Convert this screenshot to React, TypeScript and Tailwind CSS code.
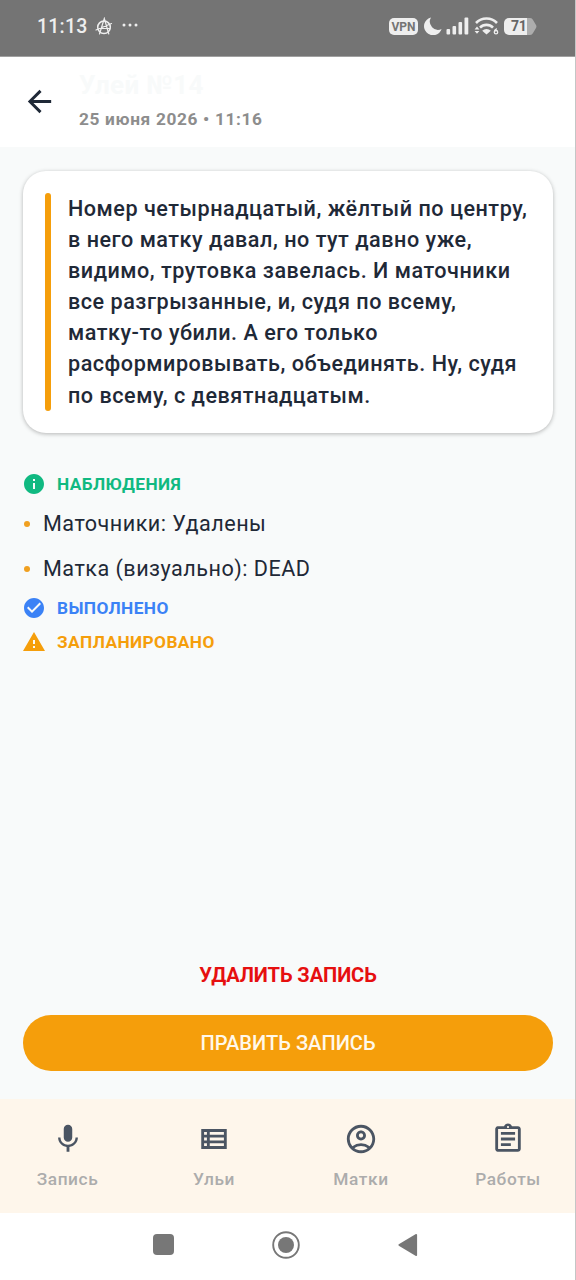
import React from 'react';
import {
    MdArrowBack,
    MdCheckCircle,
    MdInfo,
    MdMic,
    MdOutlineAccountCircle,
    MdOutlineAssignment,
    MdOutlineViewList,
    MdWarning,
} from 'react-icons/md';
import { IconType } from 'react-icons';

const NOTE_LINES = [
    'Номер четырнадцатый, жёлтый по центру,',
    'в него матку давал, но тут давно уже,',
    'видимо, трутовка завелась. И маточники',
    'все разгрызанные, и, судя по всему,',
    'матку-то убили. А его только',
    'расформировывать, объединять. Ну, судя',
    'по всему, с девятнадцатым.',
];

const OBSERVATIONS = ['Маточники: Удалены', 'Матка (визуально): DEAD'];

const TABS: { label: string; icon: IconType }[] = [
    { label: 'Запись', icon: MdMic },
    { label: 'Ульи', icon: MdOutlineViewList },
    { label: 'Матки', icon: MdOutlineAccountCircle },
    { label: 'Работы', icon: MdOutlineAssignment },
];

const StatusBar = () => (
    <div className="flex h-14 shrink-0 items-center bg-[#747474] pl-[37px] pr-[39px] pb-[4px] text-[#eeeeee]">
        <span className="pt-[2px] text-[19.5px] font-medium leading-6 tracking-[0.2px]">11:13</span>
        {/* circled A */}
        <svg className="ml-[8px] h-[19px] w-[18px]" viewBox="0 0 18 19" fill="none" stroke="currentColor" strokeWidth="1.5" strokeLinecap="round">
            <circle cx="9" cy="10.3" r="6.3" />
            <path d="M4.5 17 9.3 1.5 13.8 17M1 13 16.5 6.5M4 11.5h11" strokeWidth="1.2" />
        </svg>
        <svg className="ml-[9px] mb-[2px] h-[4px] w-[16px]" viewBox="0 0 16 4" fill="currentColor">
            <circle cx="2" cy="2" r="1.5" />
            <circle cx="8" cy="2" r="1.5" />
            <circle cx="14" cy="2" r="1.5" />
        </svg>

        <div className="ml-auto flex items-center">
            <span className="flex h-[17px] w-[29px] items-center justify-center rounded-[5px] bg-[#eeeeee] pt-px text-[12px] font-bold leading-none text-[#747474]">VPN</span>
            <svg className="ml-[6px] h-[18px] w-[18px]" viewBox="0 0 18 18" fill="currentColor">
                <path d="M7 .5A9 9 0 1 0 17.6 12 8.2 8.2 0 0 1 7 .5Z" />
            </svg>
            <svg className="ml-[4px] h-[18px] w-[23px]" viewBox="0 0 23 18" fill="currentColor">
                <rect x="0.5" y="12" width="3.6" height="5.5" rx="1" />
                <rect x="6.5" y="9" width="3.6" height="8.5" rx="1" />
                <rect x="12.5" y="5" width="3.6" height="12.5" rx="1" />
                <rect x="18.5" y="0.5" width="3.8" height="17" rx="1" />
            </svg>
            <svg className="ml-[5px] h-[18px] w-[25px]" viewBox="0 0 25 18" fill="none" stroke="currentColor">
                <path d="M2 6A14.5 14.5 0 0 1 23 6" strokeWidth="2.6" />
                <path d="M6 10.7A9 9 0 0 1 19 10.7" strokeWidth="2.6" />
                <path d="M8.2 13.8 12.5 17.5 16.8 13.8A6 6 0 0 0 8.2 13.8Z" fill="currentColor" stroke="none" />
                <path d="M3 9.5 5.4 12.4H.6ZM.6 14H5.4L3 16.8Z" fill="currentColor" stroke="none" />
                <path d="M22.8 11.6C21.2 12.3 20.3 13.6 20.3 15.2" strokeWidth="1.3" />
                <circle cx="22" cy="15.2" r="1.7" strokeWidth="1.3" />
            </svg>
            <div className="relative ml-[5px] flex h-[17px] w-[33px] items-center">
                <svg className="absolute inset-0 h-[17px] w-[33px]" viewBox="0 0 33 17">
                    <path d="M5 0H23V17H5A5 5 0 0 1 0 12V5A5 5 0 0 1 5 0Z" fill="#eeeeee" />
                    <path d="M23 0H26C27.5 0 28.4.7 29 2L32 7C32.6 8 32.6 9 32 10L29 15C28.4 16.3 27.5 17 26 17H23Z" fill="#adadad" />
                </svg>
                <span className="relative pl-[7px] text-[14px] font-bold leading-none tracking-[-0.3px] text-[#666666]">71</span>
            </div>
        </div>
    </div>
);

const Header = () => (
    <header className="flex h-[91px] shrink-0 items-start border-t border-[#a0a0a0] bg-white pl-[22px]">
        <MdArrowBack className="mt-[27px] h-[35px] w-[35px] text-[#1f2937]" />
        <div className="ml-[22px] pt-[12px]">
            <h1 className="text-[26px] font-bold leading-[32px] tracking-[0.4px] text-[#f8fafa]">Улей №14</h1>
            <p className="mt-[6px] text-[17.3px] font-bold leading-6 tracking-[0.65px] text-[#8d8d8d]">25 июня 2026 • 11:16</p>
        </div>
    </header>
);

const SectionTitle = ({ icon: Icon, title, className }: { icon: IconType; title: string; className: string }) => (
    <div className={`flex h-[34px] items-center ${className}`}>
        <Icon className="-ml-px h-[24px] w-[24px]" />
        <h2 className="ml-[11px] pt-px text-[17.3px] font-bold tracking-[0.4px]">{title}</h2>
    </div>
);

const BottomNav = () => (
    <nav className="grid h-[114px] shrink-0 grid-cols-[135px_158px_136px_158px] overflow-hidden bg-[#fef6eb]">
        {TABS.map(({ label, icon: Icon }) => (
            <div key={label} className="flex flex-col items-center pt-[23px]">
                <Icon className="h-[34px] w-[34px] text-[#4b5563]" />
                <span className="mt-[11px] text-[17.3px] font-medium leading-6 tracking-[0.6px] text-[#acacac]">{label}</span>
            </div>
        ))}
    </nav>
);

const SystemNav = () => (
    <div className="flex h-[67px] shrink-0 items-center bg-white pb-[4px] pl-[153px] text-[#777777]">
        <div className="h-[21px] w-[21px] rounded-[4px] bg-current" />
        <svg className="ml-[98px] h-[28px] w-[28px]" viewBox="0 0 28 28">
            <circle cx="14" cy="14" r="12.8" fill="none" stroke="currentColor" strokeWidth="1.9" />
            <circle cx="14" cy="14" r="8" fill="currentColor" />
        </svg>
        <svg className="ml-[98px] h-[24px] w-[20px]" viewBox="0 0 20 24">
            <path d="M18.3 1.8V22.2L1.2 12Z" fill="currentColor" stroke="currentColor" strokeWidth="1.6" strokeLinejoin="round" />
        </svg>
    </div>
);

export default function App() {
    return (
        <div className="relative flex h-[1280px] w-[576px] flex-col overflow-hidden bg-[#f8fafa] font-['Roboto','Noto_Sans',sans-serif]">
            <StatusBar />
            <Header />

            <main className="flex flex-1 flex-col px-[23px] pt-[24px]">
                <section className="flex h-[262px] shrink-0 rounded-[23px] bg-white p-[22px] shadow-[0_1px_4px_rgba(0,0,0,0.28)]">
                    <div className="w-[6px] shrink-0 rounded-[3px] bg-[#f59e0b]" />
                    <p className="ml-[17px] whitespace-nowrap text-[21.6px] font-medium leading-[31.1px] tracking-[0.52px] text-[#1f2937]">
                        {NOTE_LINES.map(line => (
                            <span key={line} className="block">{line}</span>
                        ))}
                    </p>
                </section>

                <section className="mt-[34px]">
                    <SectionTitle icon={MdInfo} title="НАБЛЮДЕНИЯ" className="text-[#10b981]" />
                    <ul>
                        {OBSERVATIONS.map(item => (
                            <li key={item} className="flex h-[45px] items-center">
                                <span className="ml-px h-[6px] w-[6px] rounded-full bg-[#f0a020]" />
                                <span className="ml-[13px] pt-px text-[21.6px] tracking-[0.48px] text-[#1f2937]">{item}</span>
                            </li>
                        ))}
                    </ul>
                    <SectionTitle icon={MdCheckCircle} title="ВЫПОЛНЕНО" className="text-[#3b82f6]" />
                    <SectionTitle icon={MdWarning} title="ЗАПЛАНИРОВАНО" className="text-[#f59e0b]" />
                </section>

                <div className="mt-auto flex flex-col pb-[28px] text-[20.1px]">
                    <button className="h-[56px] font-bold tracking-[-0.1px] text-[#e60f0f]">УДАЛИТЬ ЗАПИСЬ</button>
                    <button className="mt-[12px] h-[56px] rounded-full bg-[#f59e0b] font-medium text-[#fff8ea]">ПРАВИТЬ ЗАПИСЬ</button>
                </div>
            </main>

            <BottomNav />
            <SystemNav />
            {/* screen edge */}
            <div className="absolute right-0 top-0 h-full w-px bg-[#c4c6c6]" />
        </div>
    );
}
